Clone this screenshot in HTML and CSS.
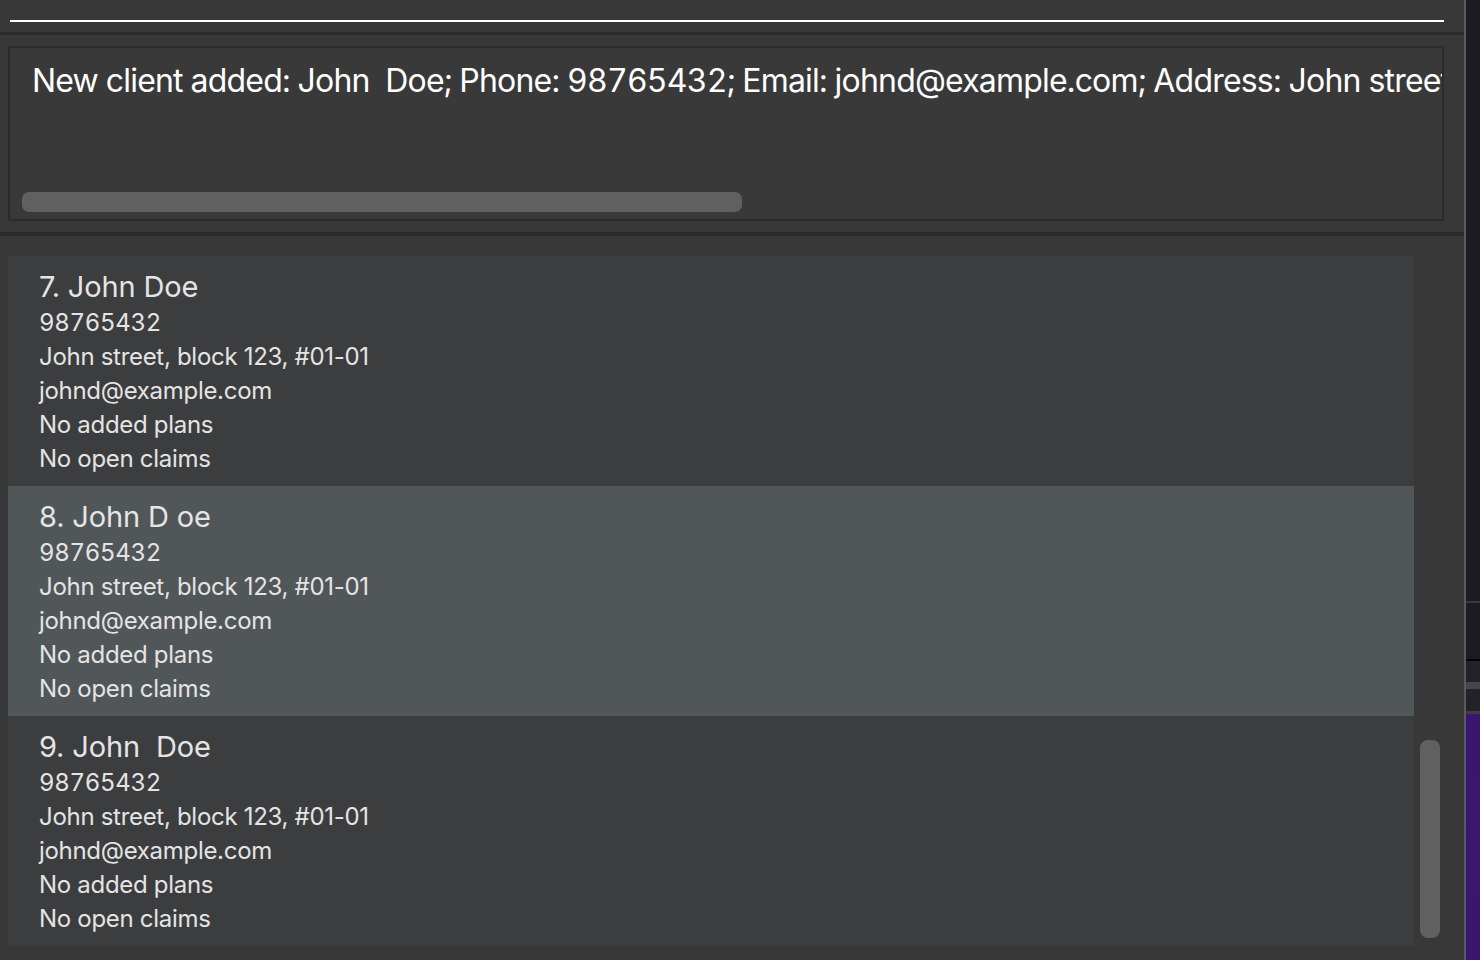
FILE: index.html
```html
<!DOCTYPE html>
<html lang="en">
<head>
<meta charset="utf-8">
<title>Client list</title>
<link rel="stylesheet" href="styles.css">
</head>
<body>
<div class="app">
  <div class="window">
    <div class="command-bar">
      <div class="command-line"></div>
    </div>
    <div class="divider"></div>
    <div class="result-wrap">
      <div class="result-box">
        <div class="result-text">New client added: John&nbsp; Doe; Phone: 98765432; Email: johnd@example.com; Address: John street, block 123, #01-01; Plans: ; Claims: </div>
        <div class="hscroll"><div class="hthumb"></div></div>
      </div>
    </div>
    <div class="divider divider-low"></div>
    <div class="list-panel">
      <div class="list">
        <div class="card">
          <div class="name">7. John Doe</div>
          <div class="line phone">98765432</div>
          <div class="line">John street, block 123, #01-01</div>
          <div class="line">johnd@example.com</div>
          <div class="line">No added plans</div>
          <div class="line">No open claims</div>
        </div>
        <div class="card selected">
          <div class="name">8. John D oe</div>
          <div class="line phone">98765432</div>
          <div class="line">John street, block 123, #01-01</div>
          <div class="line">johnd@example.com</div>
          <div class="line">No added plans</div>
          <div class="line">No open claims</div>
        </div>
        <div class="card">
          <div class="name">9. John&nbsp; Doe</div>
          <div class="line phone">98765432</div>
          <div class="line">John street, block 123, #01-01</div>
          <div class="line">johnd@example.com</div>
          <div class="line">No added plans</div>
          <div class="line">No open claims</div>
        </div>
      </div>
      <div class="vscroll"><div class="vthumb"></div></div>
    </div>
  </div>
  <div class="edge"></div>
  <div class="desktop"></div>
</div>
</body>
</html>
```

FILE: styles.css
```css
html, body {
  margin: 0;
  padding: 0;
}
body {
  width: 1480px;
  height: 960px;
  overflow: hidden;
  background: #383838;
  font-family: Inter, "Noto Sans", "Liberation Sans", sans-serif;
}
.app {
  display: flex;
  height: 960px;
}
.window {
  width: 1464px;
  display: flex;
  flex-direction: column;
  background: #383838;
}
.command-bar {
  height: 32px;
  padding: 20px 20px 0 10px;
  box-sizing: border-box;
}
.command-line {
  height: 2px;
  background: #ffffff;
}
.divider {
  height: 3px;
  background: #2b2b2b;
}
.result-wrap {
  padding: 11px 20px 11px 8px;
}
.result-box {
  height: 175px;
  box-sizing: border-box;
  border: 2px solid #2c2c2c;
  background: #393939;
  overflow: hidden;
  display: flex;
  flex-direction: column;
  justify-content: space-between;
  padding: 0 0 7px 12px;
}
.result-text {
  color: #ffffff;
  font-size: 32px;
  line-height: 40px;
  white-space: nowrap;
  overflow: hidden;
  padding-top: 13px;
  padding-left: 10px;
  letter-spacing: -0.8px;
  font-feature-settings: "tnum";
}
.hscroll {
  height: 20px;
}
.hthumb {
  width: 720px;
  height: 20px;
  border-radius: 7px;
  background: #606060;
}
.divider-low {
  height: 4px;
}
.list-panel {
  flex: 1;
  display: flex;
  padding: 20px 0 0 8px;
  min-height: 0;
}
.list {
  width: 1406px;
  display: flex;
  flex-direction: column;
}
.card {
  height: 230px;
  box-sizing: border-box;
  background: #3c3d3f;
  padding: 12px 0 0 31px;
  color: #e4e4e4;
}
.card.selected {
  background: #515659;
}
.name {
  font-size: 29px;
  line-height: 38px;
  letter-spacing: -0.15px;
}
.line {
  font-size: 24px;
  line-height: 34px;
  letter-spacing: -0.3px;
}
.phone {
  font-feature-settings: "tnum";
}
.vscroll {
  width: 50px;
  padding: 484px 0 0 6px;
  box-sizing: border-box;
}
.vthumb {
  width: 20px;
  height: 198px;
  border-radius: 8px;
  background: #606060;
}
.edge {
  width: 2px;
  background: #5a5a5a;
}
.desktop {
  flex: 1;
  background: linear-gradient(to bottom,
    #1d1b21 0, #1d1b21 601px,
    #3a3840 601px, #3a3840 603px,
    #1d1b21 603px, #1d1b21 659px,
    #050505 659px, #050505 661px,
    #242229 661px, #242229 682px,
    #46444c 682px, #46444c 689px,
    #242229 689px, #242229 711px,
    #3e3c44 711px, #3e3c44 714px,
    #3b1670 714px, #3a176c 960px);
}
```
